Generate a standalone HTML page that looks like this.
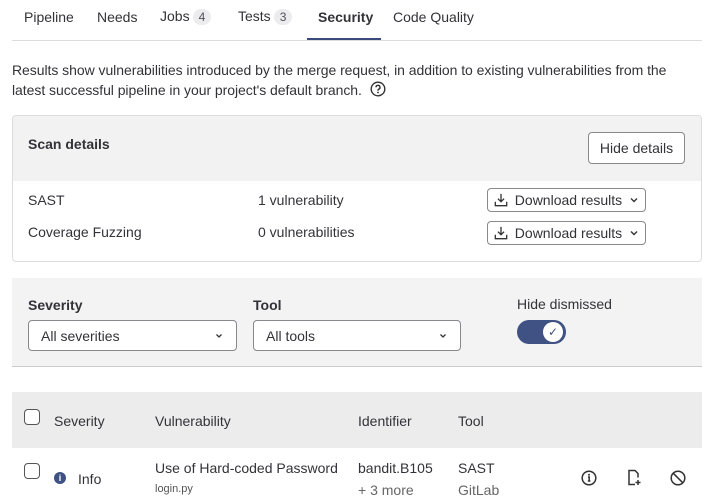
<!DOCTYPE html><html><head><style>
*{box-sizing:border-box;margin:0;padding:0}
body{width:718px;height:498px;overflow:hidden;background:#fff;font-family:"Liberation Sans",sans-serif;font-size:14px;color:#333238;position:relative}
.a{position:absolute;white-space:nowrap}
.badge{display:inline-block;background:#ececef;border-radius:9px;font-size:12px;padding:1px 6px;margin-left:3px;color:#535158}
.btn{position:absolute;border:1px solid #89888d;border-radius:4px;background:#fff;display:flex;align-items:center;justify-content:center;font-size:14px}
.sel{position:absolute;border:1px solid #89888d;border-radius:4px;background:#fff;padding:0 12px;display:flex;align-items:center;justify-content:space-between;font-size:14px}
.cb{position:absolute;width:16px;height:16px;border:1.5px solid #555;border-radius:4px;background:#fff}
</style></head><body>
<div class="a" style="left:24px;top:9px">Pipeline</div>
<div class="a" style="left:97px;top:9px">Needs</div>
<div class="a" style="left:160px;top:8px">Jobs<span class="badge">4</span></div>
<div class="a" style="left:238px;top:8px">Tests<span class="badge">3</span></div>
<div class="a" style="left:318px;top:9px;font-weight:bold">Security</div>
<div class="a" style="left:393px;top:9px">Code Quality</div>
<div class="a" style="left:12px;top:40px;width:690px;height:1px;background:#dcdcde"></div>
<div class="a" style="left:307px;top:38px;width:74px;height:2px;background:#3a4a7a"></div>
<div class="a" style="left:12px;top:60px;line-height:20px;font-size:14px;letter-spacing:-0.05px">Results show vulnerabilities introduced by the merge request, in addition to existing vulnerabilities from the<br>latest successful pipeline in your project's default branch. <svg width="16" height="16" viewBox="0 0 16 16" style="vertical-align:-2px;margin-left:4px"><circle cx="8" cy="8" r="6.8" fill="none" stroke="#333" stroke-width="1.4"/><path d="M6 6.3a2 2 0 1 1 2.7 1.9c-.5.2-.7.6-.7 1.1v.4" fill="none" stroke="#333" stroke-width="1.4"/><circle cx="8" cy="11.5" r=".9" fill="#333"/></svg></div>
<div class="a" style="left:12px;top:115px;width:690px;height:147px;border:1px solid #dcdcde;border-radius:4px;overflow:hidden">
<div style="height:65px;background:#f2f2f2"></div></div>
<div class="a" style="left:28px;top:136px;font-weight:bold">Scan details</div>
<div class="btn" style="left:588px;top:132px;width:97px;height:32px">Hide details</div>
<div class="a" style="left:28px;top:192px">SAST</div>
<div class="a" style="left:258px;top:192px">1 vulnerability</div>
<div class="a" style="left:28px;top:224px">Coverage Fuzzing</div>
<div class="a" style="left:258px;top:224px">0 vulnerabilities</div>
<div class="btn" style="left:487px;top:188px;width:159px;height:24px">
<svg width="14" height="14" viewBox="0 0 16 16" style="margin-right:7px"><path d="M8 1v9M4.5 6.5 8 10l3.5-3.5M1.5 10v4.5h13V10" fill="none" stroke="#333" stroke-width="1.5"/></svg>Download results<svg width="10" height="10" viewBox="0 0 10 10" style="margin-left:7px"><path d="M2 3.5 5 6.5 8 3.5" fill="none" stroke="#333" stroke-width="1.4"/></svg></div>
<div class="btn" style="left:487px;top:221px;width:159px;height:24px">
<svg width="14" height="14" viewBox="0 0 16 16" style="margin-right:7px"><path d="M8 1v9M4.5 6.5 8 10l3.5-3.5M1.5 10v4.5h13V10" fill="none" stroke="#333" stroke-width="1.5"/></svg>Download results<svg width="10" height="10" viewBox="0 0 10 10" style="margin-left:7px"><path d="M2 3.5 5 6.5 8 3.5" fill="none" stroke="#333" stroke-width="1.4"/></svg></div>
<div class="a" style="left:12px;top:278px;width:690px;height:89px;background:#f3f3f3;border-bottom:1px solid #ccc"></div>
<div class="a" style="left:28px;top:297px;font-weight:bold">Severity</div>
<div class="a" style="left:253px;top:297px;font-weight:bold">Tool</div>
<div class="a" style="left:517px;top:296px">Hide dismissed</div>
<div class="sel" style="left:28px;top:320px;width:209px;height:31px">All severities<svg width="10" height="10" viewBox="0 0 10 10"><path d="M2.5 3.5 5 6 7.5 3.5" fill="none" stroke="#333" stroke-width="1.3"/></svg></div>
<div class="sel" style="left:253px;top:320px;width:208px;height:31px">All tools<svg width="10" height="10" viewBox="0 0 10 10"><path d="M2.5 3.5 5 6 7.5 3.5" fill="none" stroke="#333" stroke-width="1.3"/></svg></div>
<div class="a" style="left:517px;top:320px;width:49px;height:24px;background:#3f5283;border-radius:12px"></div>
<div class="a" style="left:543px;top:322px;width:20px;height:20px;background:#fff;border-radius:50%;text-align:center;line-height:20px;font-size:12px;color:#3f5283">&#10003;</div>
<div class="a" style="left:12px;top:392px;width:690px;height:56px;background:#ececec"></div>
<div class="cb" style="left:24px;top:409px"></div>
<div class="a" style="left:54px;top:413px">Severity</div>
<div class="a" style="left:155px;top:413px">Vulnerability</div>
<div class="a" style="left:358px;top:413px">Identifier</div>
<div class="a" style="left:458px;top:413px">Tool</div>
<div class="cb" style="left:24px;top:463px"></div>
<div class="a" style="left:54px;top:472px;width:12px;height:12px;border-radius:50%;background:#3f5283;color:#fff;font-size:9px;font-weight:bold;text-align:center;line-height:12px">i</div>
<div class="a" style="left:78px;top:471px">Info</div>
<div class="a" style="left:155px;top:460px">Use of Hard-coded Password</div>
<div class="a" style="left:155px;top:483px;font-size:11px;color:#555">login.py</div>
<div class="a" style="left:358px;top:460px">bandit.B105</div>
<div class="a" style="left:358px;top:482px;color:#666">+ 3 more</div>
<div class="a" style="left:458px;top:460px">SAST</div>
<div class="a" style="left:458px;top:482px;color:#666">GitLab</div>
<svg class="a" style="left:581px;top:470px" width="16" height="16" viewBox="0 0 16 16"><circle cx="8" cy="8" r="6.8" fill="none" stroke="#333" stroke-width="1.5"/><path d="M7 7h1.2v4M6.8 11h2.6" fill="none" stroke="#333" stroke-width="1.5"/><circle cx="8" cy="4.8" r="1" fill="#333"/></svg>
<svg class="a" style="left:626px;top:469px" width="16" height="17" viewBox="0 0 16 17"><path d="M9 15.5H3V1.5h6l3 3v4" fill="none" stroke="#333" stroke-width="1.5"/><path d="M12 11v5M9.5 13.5h5" stroke="#333" stroke-width="1.5"/></svg>
<svg class="a" style="left:670px;top:470px" width="16" height="16" viewBox="0 0 16 16"><circle cx="8" cy="8" r="6.8" fill="none" stroke="#333" stroke-width="1.5"/><path d="M3.3 3.3l9.4 9.4" stroke="#333" stroke-width="1.5"/></svg>
</body></html>
